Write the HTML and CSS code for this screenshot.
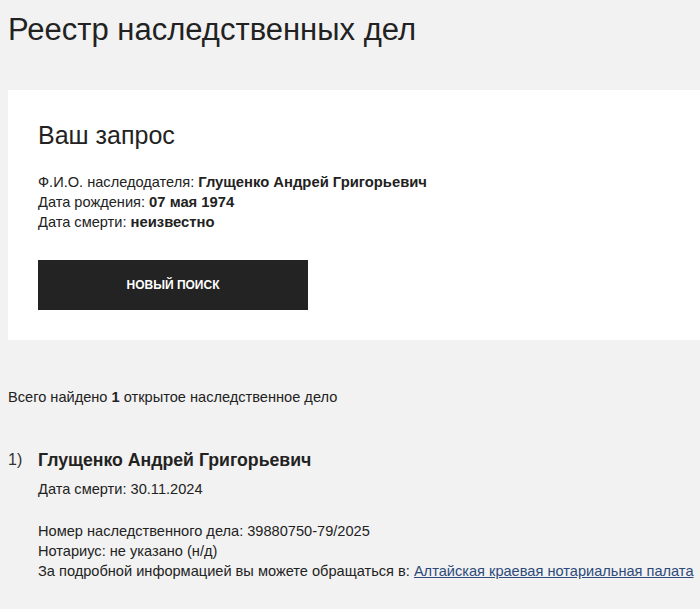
FILE: index.html
```html
<!DOCTYPE html>
<html lang="ru">
<head>
  <meta charset="UTF-8" />
  <meta name="viewport" content="width=device-width, initial-scale=1" />
  <title>Реестр наследственных дел</title>
  <link rel="stylesheet" href="styles.css">
</head>
<body>
  <!-- page title -->
  <h1 class="page-title">Реестр наследственных дел</h1>

  <!-- request summary -->
  <section class="request-card">
    <h2 class="request-title">Ваш запрос</h2>
    <div class="request-info">
      <div>Ф.И.О. наследодателя: <b>Глущенко Андрей Григорьевич</b></div>
      <div>Дата рождения: <b>07 мая 1974</b></div>
      <div>Дата смерти: <b>неизвестно</b></div>
    </div>
    <a href="#" class="search-button">Новый поиск</a>
  </section>

  <!-- results -->
  <p class="found-count">Всего найдено <b>1</b> открытое наследственное дело</p>

  <ol class="case-list">
    <li class="case-item">
      <span class="case-num">1)</span>
      <div class="case-body">
        <div class="case-name">Глущенко Андрей Григорьевич</div>
        <div class="case-death">Дата смерти: 30.11.2024</div>
        <div class="case-details">
          <div>Номер наследственного дела: 39880750-79/2025</div>
          <div>Нотариус: не указано (н/д)</div>
          <div class="nowrap">За подробной информацией вы можете обращаться в: <a href="#" class="chamber-link">Алтайская краевая нотариальная палата</a></div>
        </div>
      </div>
    </li>
  </ol>
</body>
</html>
```

FILE: styles.css
```css
body {
  margin: 0;
  padding: 0 0 0 8px;
  background-color: #f2f2f2;
  color: #222;
  font-family: "Liberation Sans", Arial, sans-serif;
  font-size: 14.6px;
  overflow: hidden;
}

/* page heading */
.page-title {
  margin: 0;
  padding-top: 11px;
  font-size: 31px;
  font-weight: normal;
  line-height: 38px;
}

/* request card */
.request-card {
  margin-top: 41px;
  background: #fff;
  padding: 30px 30px 30px 30px;
  height: 190px;
}

.request-title {
  margin: 0 0 22px;
  font-size: 25px;
  font-weight: normal;
  line-height: 30px;
}

.request-info {
  line-height: 20px;
}

.request-info b {
  font-size: 14.8px;
}

.search-button {
  display: flex;
  align-items: center;
  justify-content: center;
  width: 270px;
  height: 50px;
  margin-top: 28px;
  background: #232323;
  color: #fff;
  font-size: 12px;
  font-weight: bold;
  text-transform: uppercase;
  text-decoration: none;
}

/* results */
.found-count {
  margin: 47px 0 0;
  line-height: 20px;
}

.case-list {
  list-style: none;
  margin: 41px 0 0;
  padding: 0;
}

.case-item {
  display: flex;
}

.case-num {
  width: 30px;
  font-size: 16px;
  line-height: 24px;
  color: #333;
}

.case-name {
  font-size: 17.7px;
  font-weight: bold;
  line-height: 24px;
}

.case-death {
  margin-top: 7px;
  line-height: 20px;
}

.case-details {
  margin-top: 22px;
  line-height: 20px;
}

.nowrap {
  white-space: nowrap;
}

.chamber-link {
  color: #2d4a7a;
}
```
